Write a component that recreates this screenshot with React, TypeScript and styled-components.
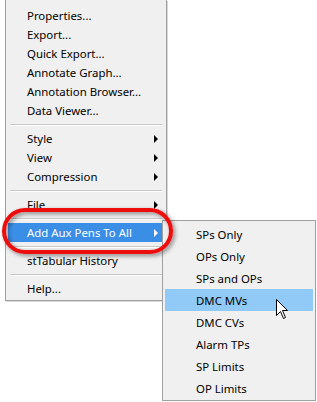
import React from "react";
import styled, { createGlobalStyle } from "styled-components";

const Global = createGlobalStyle`
  html, body { margin: 0; padding: 0; background: #ffffff; }
  body { font-family: "Segoe UI", "Noto Sans", "Liberation Sans", sans-serif; }
`;

const Stage = styled.div`
  position: relative;
  width: 317px;
  height: 402px;
  overflow: hidden;
  background: #ffffff;
`;

const Menu = styled.div`
  margin-left: 5px;
  width: 160px;
  background: #f0f0f0;
  border: 1px solid #a0a0a0;
  border-top: none;
  padding: 6px 0 2px;
  display: flex;
  flex-direction: column;
  box-shadow: 1px 1px 0 #d8d8d8;
`;

const Row = styled.div<{ $h: number; $pad: number; $active?: "strong" | "soft" }>`
  position: relative;
  height: ${(p) => p.$h}px;
  display: flex;
  align-items: center;
  padding-left: ${(p) => p.$pad}px;
  margin: 0 2px;
  font-size: 11.4px;
  color: ${(p) => (p.$active === "strong" ? "#ffffff" : "#000000")};
  background: ${(p) =>
    p.$active === "strong" ? "#3a8ee6" : p.$active === "soft" ? "#91c9f7" : "transparent"};
  white-space: nowrap;
`;

const Arrow = styled.span<{ $light?: boolean }>`
  position: absolute;
  right: 6px;
  top: 50%;
  margin-top: -4px;
  width: 0;
  height: 0;
  border-top: 4px solid transparent;
  border-bottom: 4px solid transparent;
  border-left: 4px solid ${(p) => (p.$light ? "#ffffff" : "#000000")};
`;

const Separator = styled.div`
  height: 1px;
  margin: 4px 4px 4px 4px;
  background: #c8c8c8;
  box-shadow: 0 1px 0 #ffffff;
`;

const SubMenu = styled.div`
  position: absolute;
  left: 162px;
  top: 220px;
  width: 152px;
  background: #f0f0f0;
  border: 1px solid #a0a0a0;
  padding: 2px 0 1px;
  display: flex;
  flex-direction: column;
`;

const Ring = styled.svg`
  position: absolute;
  left: 0;
  top: 205px;
  overflow: visible;
`;

const Cursor = styled.svg`
  position: absolute;
  left: 276px;
  top: 299px;
`;

type Item = { label: string; sub?: boolean } | "sep";

const main: Item[] = [
  { label: "Properties..." },
  { label: "Export..." },
  { label: "Quick Export..." },
  { label: "Annotate Graph..." },
  { label: "Annotation Browser..." },
  { label: "Data Viewer..." },
  "sep",
  { label: "Style", sub: true },
  { label: "View", sub: true },
  { label: "Compression", sub: true },
  "sep",
  { label: "File", sub: true },
  "sep",
  { label: "Add Aux Pens To All", sub: true },
  "sep",
  { label: "stTabular History" },
  "sep",
  { label: "Help..." },
];

const sub = [
  "SPs Only",
  "OPs Only",
  "SPs and OPs",
  "DMC MVs",
  "DMC CVs",
  "Alarm TPs",
  "SP Limits",
  "OP Limits",
];

export default function App() {
  return (
    <Stage>
      <Global />
      <Menu>
        {main.map((it, i) =>
          it === "sep" ? (
            <Separator key={i} />
          ) : (
            <Row
              key={i}
              $h={19}
              $pad={19}
              $active={it.label === "Add Aux Pens To All" ? "strong" : undefined}
            >
              {it.label}
              {it.sub && <Arrow $light={it.label === "Add Aux Pens To All"} />}
            </Row>
          )
        )}
      </Menu>
      <SubMenu>
        {sub.map((s) => (
          <Row key={s} $h={22} $pad={31} $active={s === "DMC MVs" ? "soft" : undefined}>
            {s}
          </Row>
        ))}
      </SubMenu>
      <Ring width="176" height="52" viewBox="0 0 176 52">
        <defs>
          <filter id="sh" x="-10%" y="-30%" width="130%" height="170%">
            <feDropShadow dx="2" dy="2" stdDeviation="2" floodColor="#000" floodOpacity="0.45" />
          </filter>
        </defs>
        <rect
          x="4"
          y="5"
          width="167"
          height="42"
          rx="21"
          ry="21"
          fill="none"
          stroke="#ee1111"
          strokeWidth="4"
          filter="url(#sh)"
        />
      </Ring>
      <Cursor width="13" height="21" viewBox="0 0 13 21">
        <path
          d="M0.5 0.5 L0.5 16.5 L4.5 12.5 L7.5 19.5 L9.5 18.5 L6.5 11.5 L11.5 11.5 Z"
          fill="#ffffff"
          stroke="#000000"
          strokeWidth="1"
          strokeLinejoin="miter"
        />
      </Cursor>
    </Stage>
  );
}
